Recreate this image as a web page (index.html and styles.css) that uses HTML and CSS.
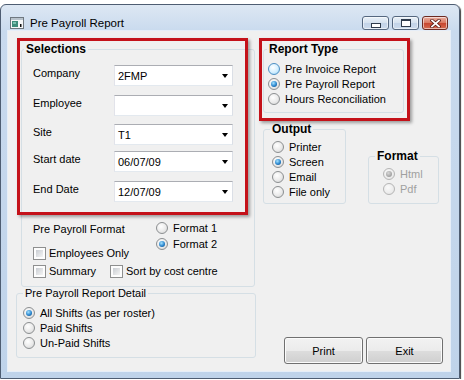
FILE: index.html
```html
<!DOCTYPE html>
<html lang="en">
<head>
    <meta charset="UTF-8">
    <title>Pre Payroll Report</title>
    <link rel="stylesheet" href="styles.css">
</head>
<body>
    <div class="window">
        <!-- Заголовок окна -->
        <div class="titlebar">
            <svg class="app-icon" width="14" height="12" viewBox="0 0 14 12">
                <rect x="0.5" y="0.5" width="13" height="11" fill="#f4f6f8" stroke="#6f7880"/>
                <rect x="1" y="1" width="12" height="2" fill="#b9c3cc"/>
                <rect x="2" y="4" width="6" height="6" fill="#3f8c7b"/>
                <rect x="3" y="5" width="3" height="2" fill="#7cc1b0"/>
                <rect x="10" y="7" width="1.5" height="3" fill="#111"/>
            </svg>
            <span class="title">Pre Payroll Report</span>
            <div class="caption-buttons">
                <div class="cap"><span class="glyph-min"></span></div>
                <div class="cap"><span class="glyph-max"></span></div>
                <div class="cap close">
                    <svg width="11" height="9" viewBox="0 0 11 9">
                        <path d="M2 1.5 L9 7.5 M9 1.5 L2 7.5" stroke="#5a1f18" stroke-width="3.4" stroke-linecap="square"/>
                        <path d="M2 1.5 L9 7.5 M9 1.5 L2 7.5" stroke="#fff" stroke-width="1.7" stroke-linecap="square"/>
                    </svg>
                </div>
            </div>
        </div>

        <div class="client">
            <div class="col-left">
                <fieldset class="group selections">
                    <legend class="bold">Selections</legend>
                    <div class="sel-body">
                        <div class="sel-grid">
                            <span class="lbl">Company</span>
                            <div class="combo">2FMP</div>
                            <span class="lbl">Employee</span>
                            <div class="combo"></div>
                            <span class="lbl">Site</span>
                            <div class="combo">T1</div>
                            <span class="lbl">Start date</span>
                            <div class="combo">06/07/09</div>
                            <span class="lbl">End Date</span>
                            <div class="combo">12/07/09</div>
                        </div>

                        <div class="format-block">
                            <div>
                                <div class="format-lbl">Pre Payroll Format</div>
                                <div class="opt emp"><span class="check"></span>Employees Only</div>
                            </div>
                            <div>
                                <div class="opt"><span class="radio"></span>Format 1</div>
                                <div class="opt"><span class="radio checked"></span>Format 2</div>
                            </div>
                        </div>
                        <div class="check-row">
                            <div class="opt summary"><span class="check"></span>Summary</div>
                            <div class="opt"><span class="check"></span>Sort by cost centre</div>
                        </div>
                    </div>
                </fieldset>

                <fieldset class="group detail">
                    <legend>Pre Payroll Report Detail</legend>
                    <div class="detail-body">
                        <div class="opt row15"><span class="radio checked"></span>All Shifts (as per roster)</div>
                        <div class="opt row15"><span class="radio"></span>Paid Shifts</div>
                        <div class="opt row15"><span class="radio"></span>Un-Paid Shifts</div>
                    </div>
                </fieldset>
            </div>

            <div class="col-right">
                <fieldset class="group report-type">
                    <legend class="bold">Report Type</legend>
                    <div class="report-body">
                        <div class="opt row15"><span class="radio hover"></span>Pre Invoice Report</div>
                        <div class="opt row15"><span class="radio checked"></span>Pre Payroll Report</div>
                        <div class="opt row15"><span class="radio"></span>Hours Reconciliation</div>
                    </div>
                </fieldset>

                <div class="out-row">
                    <fieldset class="group output">
                        <legend class="bold">Output</legend>
                        <div class="output-body">
                            <div class="opt row15"><span class="radio"></span>Printer</div>
                            <div class="opt row15"><span class="radio checked"></span>Screen</div>
                            <div class="opt row15"><span class="radio"></span>Email</div>
                            <div class="opt row15"><span class="radio"></span>File only</div>
                        </div>
                    </fieldset>
                    <fieldset class="group format">
                        <legend class="bold">Format</legend>
                        <div class="format-body">
                            <div class="opt row15 disabled"><span class="radio checked"></span>Html</div>
                            <div class="opt row15 disabled"><span class="radio"></span>Pdf</div>
                        </div>
                    </fieldset>
                </div>

                <div class="buttons">
                    <button class="btn print">Print</button>
                    <button class="btn exit">Exit</button>
                </div>
            </div>
        </div>

        <!-- Красные рамки-выделения поверх формы -->
        <div class="highlight hl-selections"></div>
        <div class="highlight hl-report"></div>
    </div>
</body>
</html>
```

FILE: styles.css
```css
body {
    margin: 0;
    background: #fff;
    font-family: "Liberation Sans", Arial, sans-serif;
    font-size: 11px;
    color: #000;
}

.window {
    position: relative;
    margin-top: 4px;
    width: 460px;
    height: 375px;
    box-sizing: border-box;
    padding: 0 9px 7px 7px;
    border: 1px solid #4e5d72;
    border-radius: 6px 6px 0 0;
    background: linear-gradient(#dde7f3 0, #c9daee 26px, #bfd3ea 100%);
    box-shadow: 1px 1px 1px rgba(0, 0, 0, 0.75);
    display: flex;
    flex-direction: column;
}

/* Заголовок */
.titlebar {
    height: 26px;
    display: flex;
    align-items: flex-end;
    flex: none;
}

.app-icon {
    margin: 0 6px 2px 2px;
}

.title {
    font-size: 11.5px;
    line-height: 14px;
    margin-bottom: 1px;
    color: #000;
}

.caption-buttons {
    margin-left: auto;
    margin-right: 2px;
    margin-bottom: 1px;
    display: flex;
    gap: 3px;
}

.cap {
    width: 27px;
    height: 14px;
    box-sizing: border-box;
    border: 1px solid #55677f;
    border-radius: 3px;
    background: linear-gradient(#e9f0f8 0%, #d5e1ef 50%, #c2d3e8 51%, #cddbec 100%);
    box-shadow: inset 0 0 0 1px rgba(255, 255, 255, 0.55);
    display: flex;
    align-items: center;
    justify-content: center;
}

.cap.close {
    width: 26px;
    border-color: #6b2a22;
    background: linear-gradient(#eab0a4 0%, #d9775f 50%, #c7452f 51%, #d56a50 100%);
}

.glyph-min {
    width: 8px;
    height: 3px;
    margin-top: 4px;
    border: 1px solid #2f3b4c;
    background: #fff;
}

.glyph-max {
    width: 8px;
    height: 5px;
    border: 1px solid #2f3b4c;
    border-top-width: 2px;
    background: #fff;
}

/* Клиентская область */
.client {
    flex: 1;
    display: flex;
    background: #f0f0f0;
    box-shadow: 0 0 0 1px #e6eef8;
}

.col-left {
    width: 255px;
    flex: none;
}

.col-right {
    flex: 1;
}

.group {
    margin: 0;
    padding: 0;
    box-sizing: border-box;
    border: 1px solid #d5dfe5;
    border-radius: 3px;
    min-inline-size: 0;
}

.group legend {
    padding: 0 2px;
    line-height: 14px;
}

legend.bold {
    font-weight: bold;
    font-size: 12px;
}

.selections {
    margin: 11px 0 0 13px;
    width: 234px;
    height: 245px;
}

.selections legend {
    margin-left: 2px;
}

.sel-body {
    padding: 9px 0 0 11px;
}

.sel-grid {
    display: grid;
    grid-template-columns: 81px 119px;
    grid-template-rows: 30px 29px 27px 30px 21px;
}

.lbl {
    line-height: 14px;
    margin-top: 1px;
}

.combo {
    height: 21px;
    box-sizing: border-box;
    border: 1px solid #abadb3;
    border-color: #abadb3 #dbdfe6 #e3e9ef #e2e3ea;
    background: #fff;
    display: flex;
    align-items: center;
    padding: 1px 0 0 3px;
}

.combo::after {
    content: '';
    margin-left: auto;
    margin-right: 4px;
    border-top: 4px solid #000;
    border-left: 3.5px solid transparent;
    border-right: 3.5px solid transparent;
}

.format-block {
    margin-top: 18px;
    display: grid;
    grid-template-columns: 123px auto;
}

.format-lbl {
    line-height: 16px;
    margin-top: 1px;
}

.opt {
    display: flex;
    align-items: center;
    height: 16px;
    gap: 5px;
    white-space: nowrap;
}

.opt.row15 {
    height: 15px;
}

.opt.emp {
    margin-top: 8px;
}

.check-row {
    margin-top: 2px;
    display: flex;
}

.summary {
    width: 77px;
}

.check {
    width: 13px;
    height: 13px;
    flex: none;
    box-sizing: border-box;
    border: 1px solid #8e8f8f;
    padding: 2px;
    margin-right: -2px;
    background: linear-gradient(135deg, #c9cdd2, #f4f4f4) content-box, #fdfdfd;
}

.radio {
    position: relative;
    width: 12px;
    height: 12px;
    flex: none;
    box-sizing: border-box;
    border-radius: 50%;
    border: 1px solid #8c8f91;
    background: radial-gradient(circle at 40% 35%, #ffffff 0%, #eaeaea 55%, #cfd0d1 100%);
}

.radio.checked::after {
    content: '';
    position: absolute;
    inset: 2px;
    border-radius: 50%;
    background: radial-gradient(circle at 40% 35%, #a6e3ff 0%, #2a86cf 55%, #0c3f6e 100%);
}

.radio.hover {
    border-color: #4d8fc3;
    background: radial-gradient(circle at 40% 35%, #ffffff 0%, #d3efff 55%, #8fcff2 100%);
}

.disabled {
    color: #a0a0a0;
}

.disabled .radio {
    border-color: #b5b5b5;
    background: radial-gradient(circle at 40% 35%, #fafafa 0%, #ececec 60%, #dedede 100%);
}

.disabled .radio.checked::after {
    background: radial-gradient(circle at 40% 35%, #d8d8d8 0%, #a8a8a8 60%, #8c8c8c 100%);
}

.detail {
    margin: -1px 0 0 8px;
    width: 240px;
    height: 72px;
}

.detail legend {
    margin-left: 6px;
}

.detail-body {
    padding: 5px 0 0 6px;
}

/* Правая колонка */
.report-type {
    margin-top: 11px;
    width: 141px;
    height: 71px;
}

.report-type legend {
    margin-left: 3px;
}

.report-body {
    padding: 5px 0 0 4px;
}

.out-row {
    margin-top: 9px;
    display: flex;
    align-items: flex-start;
}

.output {
    width: 83px;
    height: 82px;
}

.output legend,
.format legend {
    margin-left: 6px;
}

.output-body {
    padding: 3px 0 0 8px;
}

.format {
    margin: 27px 0 0 22px;
    width: 71px;
    height: 55px;
}

.format-body {
    padding: 3px 0 0 14px;
}

.buttons {
    margin: 133px 0 0 21px;
    display: flex;
    gap: 3px;
}

.btn {
    height: 27px;
    padding: 0;
    font-family: inherit;
    font-size: 11px;
    color: #000;
    border: 1px solid #707070;
    border-radius: 3px;
    background: linear-gradient(#f2f2f2 0%, #ebebeb 50%, #dddddd 51%, #cfcfcf 100%);
    box-shadow: inset 0 0 0 1px #fbfbfb;
}

.btn.print {
    width: 79px;
}

.btn.exit {
    width: 77px;
}

/* Выделения */
.highlight {
    position: absolute;
    box-sizing: border-box;
    border: 3px solid #c4121a;
    box-shadow: 2px 2px 3px rgba(0, 0, 0, 0.35);
    pointer-events: none;
}

.hl-selections {
    left: 16px;
    top: 33px;
    width: 231px;
    height: 177px;
}

.hl-report {
    left: 258px;
    top: 33px;
    width: 151px;
    height: 83px;
}
```
